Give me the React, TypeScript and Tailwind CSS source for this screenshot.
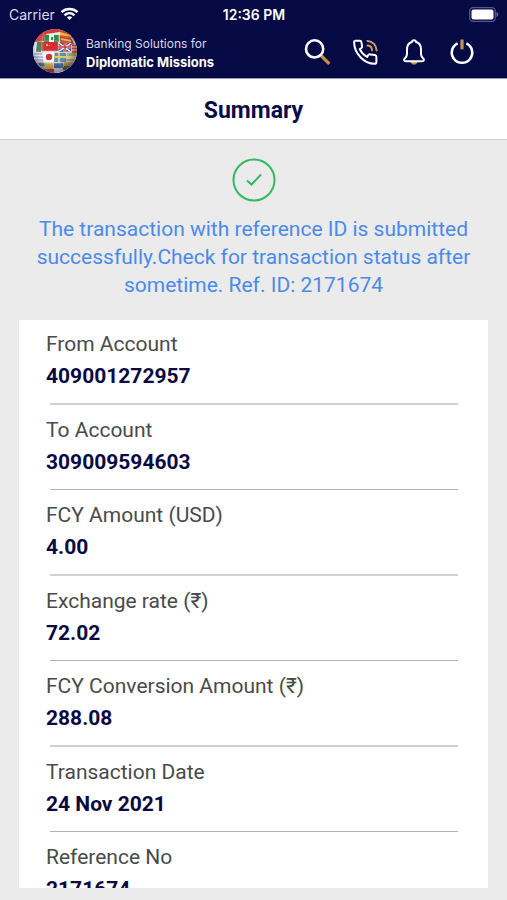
import React from "react";

const rows = [
  { label: "From Account", value: "409001272957" },
  { label: "To Account", value: "309009594603" },
  { label: "FCY Amount (USD)", value: "4.00" },
  { label: "Exchange rate (₹)", value: "72.02" },
  { label: "FCY Conversion Amount (₹)", value: "288.08" },
  { label: "Transaction Date", value: "24 Nov 2021" },
  { label: "Reference No", value: "2171674" },
];

function WifiIcon() {
  return (
    <svg viewBox="0 0 18 14" className="h-[14px] w-[19px]" fill="none" stroke="#fff" strokeWidth="2.4" aria-hidden="true">
      <path d="M1 5.2C5.5 1 12.5 1 17 5.2" />
      <path d="M4 8.3C7 5.6 11 5.6 14 8.3" />
      <path d="M6.300 10.300C8 9 10 9 11.700 10.300L9 13Z" fill="#fff" stroke="none" />
    </svg>
  );
}

function BatteryIcon() {
  return (
    <svg viewBox="0 0 30 15" className="h-[15px] w-[30px]" aria-label="Battery full" role="img">
      <rect x="0.700" y="0.700" width="25.600" height="13.600" rx="3.500" fill="none" stroke="#55578a" strokeWidth="1.300" />
      <rect x="2.500" y="2.500" width="22" height="10" rx="2" fill="#fff" />
      <path d="M27.500 5v5c2.400-.8 2.400-4.200 0-5Z" fill="#6f719c" />
    </svg>
  );
}

function GlobeLogo() {
  return (
    <svg viewBox="0 0 46 46" className="h-[46px] w-[46px]" role="img" aria-label="Diplomatic Missions logo">
      <defs>
        <clipPath id="globe"><circle cx="23" cy="23" r="22" /></clipPath>
        <radialGradient id="shade" cx="45%" cy="40%" r="58%">
          <stop offset="65%" stopColor="#000" stopOpacity="0" />
          <stop offset="100%" stopColor="#101034" stopOpacity="0.400" />
        </radialGradient>
      </defs>
      <g clipPath="url(#globe)">
        <rect width="46" height="46" fill="#d8d2d0" />
        <path d="M6 6l9-5 14-1 1 4-17 3-8 5Z" fill="#cf3b38" />
        <path d="M14 6l14-2v3l-13 2Z" fill="#f1e8df" />
        <path d="M28 1l12 5-1 5-11-3Z" fill="#d94a35" />
        <path d="M28 4l11 3v2l-11-2Z" fill="#edb94d" />
        <path d="M4 8l9-1-1 6-10 2Z" fill="#d7463f" />
        <path d="M13 7h14v7H12Z" fill="#2f8d50" />
        <path d="M17 7h5v7h-5Z" fill="#f7f5ea" />
        <path d="M19 9h2v3h-2Z" fill="#2b8c4d" />
        <path d="M28 8l12 3 2 6-14-2Z" fill="#c83932" />
        <path d="M29 10l10 2v2l-10-2Z" fill="#e6ba45" />
        <path d="M2 14h3v11H0Z" fill="#e9e8e6" />
        <path d="M5 14h4v10H4Z" fill="#4a8264" />
        <path d="M9 14h3v9H9Z" fill="#c1514a" />
        <path d="M12 14h14v9H12Z" fill="#d52d32" />
        <path d="M14 16h2v2h-2Zm3 1h1v1h-1Z" fill="#efc345" />
        <path d="M27 15h12v9H26Z" fill="#4d4f8b" />
        <path d="M27 15l12 9M39 15L26 24" stroke="#eee" strokeWidth="1.500" />
        <path d="M33 15v9M26 19h13" stroke="#fff" strokeWidth="2.500" />
        <path d="M33 15v9M26 19h13" stroke="#c9373a" strokeWidth="1.500" />
        <path d="M40 17h6v8h-6Z" fill="#d8403d" />
        <path d="M40 19h6M40 22h6" stroke="#fff" />
        <path d="M0 25h11v8H1Z" fill="#e6e5ea" />
        <path d="M0 26h10M1 29h10M2 32h9" stroke="#7795ba" strokeWidth="1.200" />
        <path d="M11 24h11v10H12Z" fill="#faf8f6" />
        <circle cx="17" cy="29" r="3.200" fill="#cf3034" />
        <path d="M23 25h11v9H22Z" fill="#5a8fb6" />
        <path d="M23 29h11M27 25v9" stroke="#e7c65d" strokeWidth="1.800" />
        <path d="M35 25h10v8H34Z" fill="#a3b47b" />
        <path d="M35 28h11v3H34Z" fill="#e8d9a1" />
        <path d="M2 34h9l3 8-6-2Z" fill="#c2ad80" />
        <path d="M6 35h7v3H8Z" fill="#4673ab" />
        <path d="M12 35h9v6h-7Z" fill="#d9ad45" />
        <path d="M22 35h9v5h-9Z" fill="#456da7" />
        <path d="M32 34h10l-3 4h-8Z" fill="#db9a42" />
        <path d="M32 38h7l-5 4h-4Z" fill="#3a7b58" />
        <path d="M12 41h10v5H12Z" fill="#bd4346" />
        <path d="M22 41h9v4h-9Z" fill="#e8e2da" />
        <path d="M3 14c12-2 28-2 40 3M0 24c14-2 31-2 46 1M3 34c12 2 27 2 40-1M12 4c-4 12-3 27 3 38M28 1c-3 14-3 29 3 43" fill="none" stroke="#e5dede" strokeWidth="0.600" opacity=".5" />
        <circle cx="23" cy="23" r="22" fill="url(#shade)" />
      </g>
    </svg>
  );
}

function SearchIcon() {
  return (
    <svg viewBox="0 0 28 28" className="h-7 w-7" fill="none" aria-hidden="true">
      <path d="M17.500 18l7.800 7.800" stroke="#c68f3e" strokeWidth="3.200" />
      <circle cx="10.600" cy="10.900" r="8.600" stroke="#fff" strokeWidth="2.600" />
    </svg>
  );
}

function PhoneIcon() {
  return (
    <svg viewBox="0 0 28 28" className="h-7 w-7" fill="none" strokeLinecap="round" strokeLinejoin="round" aria-hidden="true">
      <path d="M3.500 2.700h4.200c1 0 1.600.5 1.700 1.400l.7 4.200c.1 1.200-.4 2-1.500 2.400l-.9.400c1.700 3.600 4 6 7.500 7.800l.6-1.100c.6-1.100 1.500-1.600 2.700-1.400l4.400.7c1 .2 1.500.8 1.500 1.800v5c0 1.100-.7 1.800-1.800 1.800C12 25.700 2.300 15.500 2.100 4.300c0-.9.500-1.600 1.400-1.600Z" stroke="#fff" strokeWidth="2" />
      <path d="M15.500 3c5.200.3 8.900 4.200 9.100 9.400M15.500 7.600c2.800.2 4.400 1.900 4.500 4.700" stroke="#c99b65" strokeWidth="2" />
    </svg>
  );
}

function BellIcon() {
  return (
    <svg viewBox="0 0 28 28" className="h-7 w-7" fill="none" strokeLinejoin="round" aria-hidden="true">
      <path d="M10.500 24h7c-.7 3.400-6.300 3.400-7 0Z" fill="#c99545" />
      <path d="M14 2.200c-1.200 0-1.900.7-2 1.800-3.300.9-5 3.600-5 7.300v4.600c0 1.900-.8 3.200-2.300 4.600-1 1-.8 2.800 1 2.800h16.600c1.800 0 2-1.800 1-2.800-1.500-1.400-2.300-2.700-2.300-4.600v-4.600c0-3.700-1.700-6.400-5-7.300-.1-1.100-.8-1.800-2-1.800Z" stroke="#fff" strokeWidth="2" />
    </svg>
  );
}

function PowerIcon() {
  return (
    <svg viewBox="0 0 28 28" className="h-7 w-7" fill="none" aria-hidden="true">
      <path d="M9.600 5.400a10.200 10.200 0 1 0 8.800 0" stroke="#fff" strokeWidth="2.600" />
      <path d="M14 1.500v9.800" stroke="#c49160" strokeWidth="3.200" />
    </svg>
  );
}

const actions = [
  { name: "Search", icon: <SearchIcon /> },
  { name: "Call", icon: <PhoneIcon /> },
  { name: "Notifications", icon: <BellIcon /> },
  { name: "Log out", icon: <PowerIcon /> },
];

export default function App() {
  return (
    <div className="flex h-screen flex-col bg-[#ebebeb] font-['Roboto',sans-serif]">
      <header className="border-b border-[#9698b8] bg-[#060a44] text-white">
        <div className="grid h-7 grid-cols-3 items-center pr-2 pl-[9px] font-['Inter',sans-serif] text-[14px]">
          <div className="flex items-center gap-[5px] text-[#d9daea]">
            <span>Carrier</span>
            <WifiIcon />
          </div>
          <span className="text-center font-semibold">12:36 PM</span>
          <div className="flex justify-end"><BatteryIcon /></div>
        </div>
        <div className="flex h-[50px] items-start justify-between pr-[31px] pl-8">
          <div className="flex items-start gap-2">
            <GlobeLogo />
            <p className="pt-[7px] font-['Inter',sans-serif] text-[12px] leading-[18px] text-[#d5d6e8]">
              Banking Solutions for
              <strong className="block text-[13px] leading-[18px] font-bold text-white">Diplomatic Missions</strong>
            </p>
          </div>
          <nav className="flex gap-5 pt-[10px]">
            {actions.map((a) => (
              <button key={a.name} type="button" aria-label={a.name}>{a.icon}</button>
            ))}
          </nav>
        </div>
      </header>

      <div className="flex h-[61px] shrink-0 items-center justify-center border-b border-[#d2d2d2] bg-white pt-1">
        <h1 className="text-[23px] font-bold text-[#0b0b4b]">Summary</h1>
      </div>

      <main className="flex min-h-0 flex-1 flex-col px-[19px] pt-[18px] pb-3">
        <svg viewBox="0 0 44 44" className="h-11 w-11 shrink-0 self-center" fill="none" stroke="#32b962" strokeWidth="2" role="img" aria-label="Success">
          <circle cx="22" cy="22" r="20.500" />
          <path d="M15 22.500l4.500 4L29 16.500" />
        </svg>
        <p className="mt-[13px] mb-[21px] px-4 text-center text-[21px] leading-[28px] text-[#4c8ae8]">
          The transaction with reference ID is submitted successfully.Check for transaction status after sometime. Ref. ID: 2171674
        </p>
        <dl className="min-h-0 flex-1 overflow-hidden bg-white pr-[30px] pl-[27px]">
          {rows.map((row) => (
            <div key={row.label} className="group">
              <dt className="pt-[10px] text-[21px] leading-[28px] text-[#4a4a4a]">{row.label}</dt>
              <dd className="pt-1 pb-3 text-[21px] leading-[28px] font-bold text-[#0b0843]">{row.value}</dd>
              <div className="my-px ml-1 group-odd:h-[2px] group-odd:bg-[#d0d0d0] group-even:h-px group-even:bg-[#b4b4b4]" />
            </div>
          ))}
        </dl>
      </main>
    </div>
  );
}
